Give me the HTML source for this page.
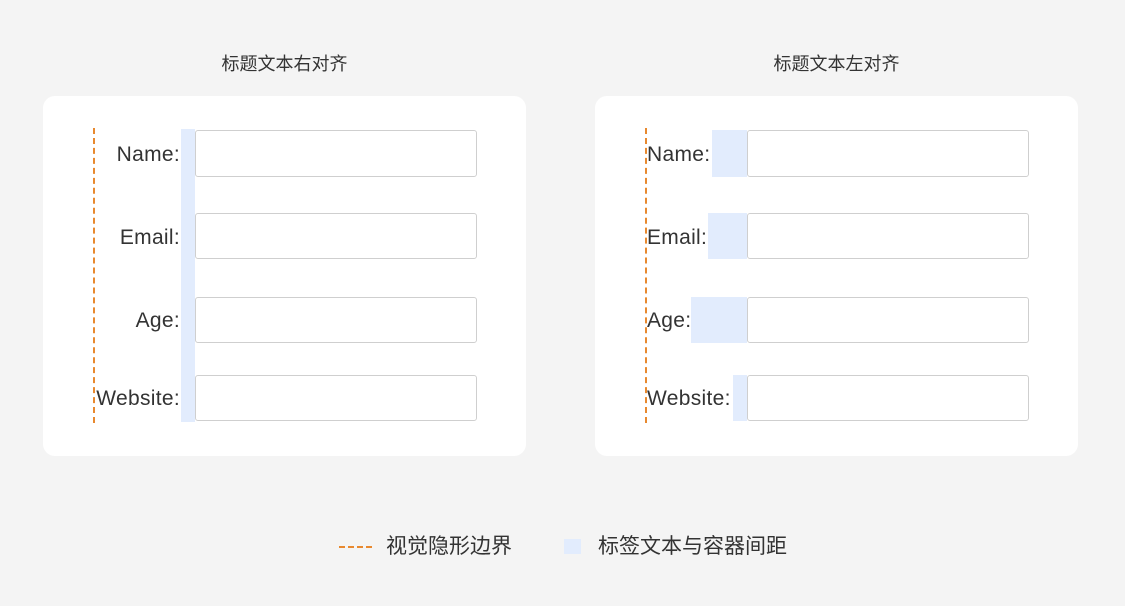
<!DOCTYPE html>
<html><head><meta charset="utf-8"><style>
body{margin:0;width:1125px;height:606px;background:#f4f4f4;position:relative;overflow:hidden;font-family:"Liberation Sans","Noto Sans CJK SC",sans-serif;color:#333}
.a{position:absolute}
.card{position:absolute;top:96px;width:483px;height:360px;background:#fff;border-radius:12px}
.inp{position:absolute;width:282px;height:47px;border:1px solid #cfcfcf;border-radius:3px;background:#fff;box-sizing:border-box}
.bl{position:absolute;background:#e2ecfd}
.lb{position:absolute;font-size:21px;line-height:24px;white-space:nowrap;letter-spacing:0.3px}
.lg{position:absolute;font-size:21px;line-height:24px;white-space:nowrap}
.dash{position:absolute;width:0;border-left:2px dashed #e8892f}
.t{position:absolute;top:50px;font-size:18px;width:483px;text-align:center}
</style></head><body>
<div class="t" style="left:43px">标题文本右对齐</div>
<div class="t" style="left:595px">标题文本左对齐</div>
<div class="card" style="left:43px"></div>
<div class="card" style="left:595px"></div>

<div class="bl" style="left:181px;top:129px;width:14px;height:293px"></div>
<div class="dash" style="left:93px;top:128px;height:295px"></div>
<div class="inp" style="left:195px;top:130px"></div>
<div class="inp" style="left:195px;top:213px;height:46px"></div>
<div class="inp" style="left:195px;top:297px;height:46px"></div>
<div class="inp" style="left:195px;top:375px;height:46px"></div>
<div class="lb" style="right:945px;top:143px">Name:</div>
<div class="lb" style="right:945px;top:226px">Email:</div>
<div class="lb" style="right:945px;top:309px">Age:</div>
<div class="lb" style="right:945px;top:387px">Website:</div>

<div class="bl" style="left:712px;top:130px;width:35px;height:47px"></div>
<div class="bl" style="left:708px;top:213px;width:39px;height:46px"></div>
<div class="bl" style="left:691px;top:297px;width:56px;height:46px"></div>
<div class="bl" style="left:733px;top:375px;width:14px;height:46px"></div>
<div class="dash" style="left:645px;top:128px;height:295px"></div>
<div class="inp" style="left:747px;top:130px"></div>
<div class="inp" style="left:747px;top:213px;height:46px"></div>
<div class="inp" style="left:747px;top:297px;height:46px"></div>
<div class="inp" style="left:747px;top:375px;height:46px"></div>
<div class="lb" style="left:647px;top:143px">Name:</div>
<div class="lb" style="left:647px;top:226px">Email:</div>
<div class="lb" style="left:647px;top:309px">Age:</div>
<div class="lb" style="left:647px;top:387px">Website:</div>

<div class="a" style="left:339px;top:546px;width:33px;border-top:2px dashed #e8892f"></div>
<div class="lg" style="left:386px;top:535px">视觉隐形边界</div>
<div class="bl" style="left:564px;top:539px;width:17px;height:15px"></div>
<div class="lg" style="left:598px;top:535px">标签文本与容器间距</div>
</body></html>
